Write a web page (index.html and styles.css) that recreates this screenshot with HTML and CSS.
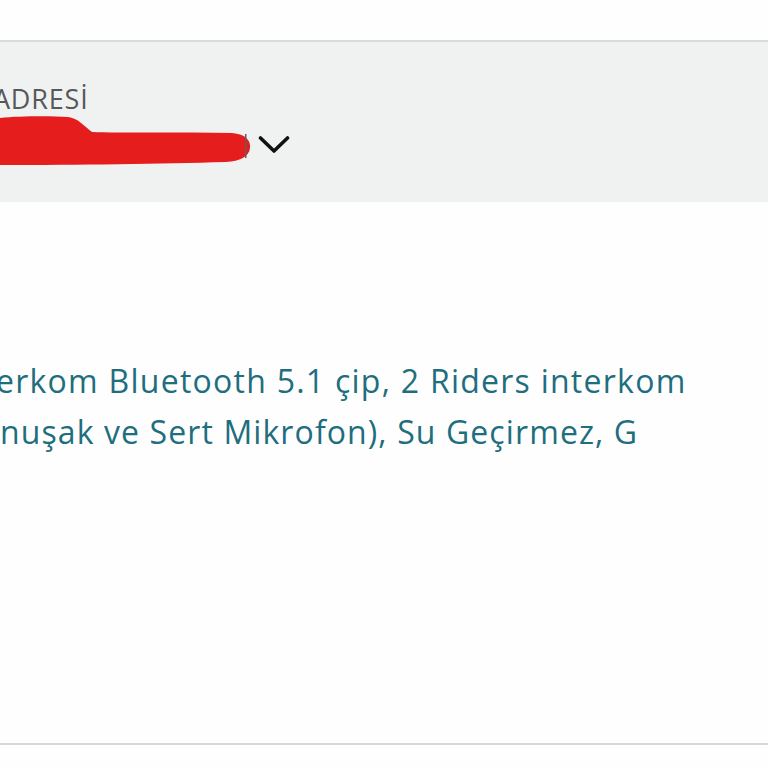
FILE: index.html
```html
<!DOCTYPE html>
<html lang="tr">
<head>
<meta charset="utf-8">
<title>Adres</title>
<link rel="stylesheet" href="styles.css">
</head>
<body>
<div class="page">
  <div class="top-space"></div>
  <section class="address-panel">
    <div class="label">ADRESİ</div>
    <div class="address-row">
      <svg class="redact" width="252" height="50" viewBox="0 0 252 50" aria-hidden="true">
        <path d="M0 2 C20 0 50 0 68 1 C78 2 84 10 92 16 C120 17 180 16 232 17 C246 18 251 25 250 32 C249 41 240 45 226 46 C160 48 80 49 0 49 Z" fill="#e51d1c"/>
        <rect x="245" y="18" width="1.5" height="24" fill="#6b5a5a"/>
      </svg>
      <svg class="chevron" width="32" height="20" viewBox="0 0 32 20" aria-hidden="true">
        <path d="M2.5 3 L16 16 L29.5 3" fill="none" stroke="#111" stroke-width="3.6" stroke-linecap="round" stroke-linejoin="round"/>
      </svg>
    </div>
  </section>
  <main class="content">
    <p class="title-line">erkom Bluetooth 5.1 çip, 2 Riders interkom</p>
    <p class="title-line second">nuşak ve Sert Mikrofon), Su Geçirmez, G</p>
  </main>
  <div class="bottom-space"></div>
</div>
</body>
</html>
```
FILE: styles.css
```css
html, body {
  margin: 0;
  padding: 0;
  background: #fefefe;
}

.page {
  width: 768px;
  height: 768px;
  overflow: hidden;
  display: flex;
  flex-direction: column;
  font-family: "Open Sans", "Noto Sans", sans-serif;
}

.top-space {
  height: 40px;
  flex: none;
}

.address-panel {
  flex: none;
  height: 160px;
  border-top: 2px solid #d8dbdb;
  background: #f0f2f2;
  display: flex;
  flex-direction: column;
  overflow: hidden;
}

.label {
  margin-top: 41px;
  margin-left: -7px;
  font-size: 27px;
  line-height: 32px;
  color: #565959;
  letter-spacing: 0.8px;
  white-space: nowrap;
}

.address-row {
  display: flex;
  align-items: flex-start;
  margin-top: 1px;
  gap: 6px;
}

.redact {
  display: block;
  flex: none;
}

.chevron {
  display: block;
  flex: none;
  margin-top: 19px;
}

.content {
  flex: 1;
  border-bottom: 2px solid #d5d9d9;
  padding-top: 153px;
  overflow: hidden;
}

.title-line {
  margin: 0 0 0 -4px;
  white-space: nowrap;
  font-size: 32px;
  line-height: 51px;
  letter-spacing: 1.25px;
  color: #1f6e7e;
}

.title-line.second {
  margin-left: 0;
  letter-spacing: 1.1px;
}

.bottom-space {
  height: 23px;
  flex: none;
}
```
